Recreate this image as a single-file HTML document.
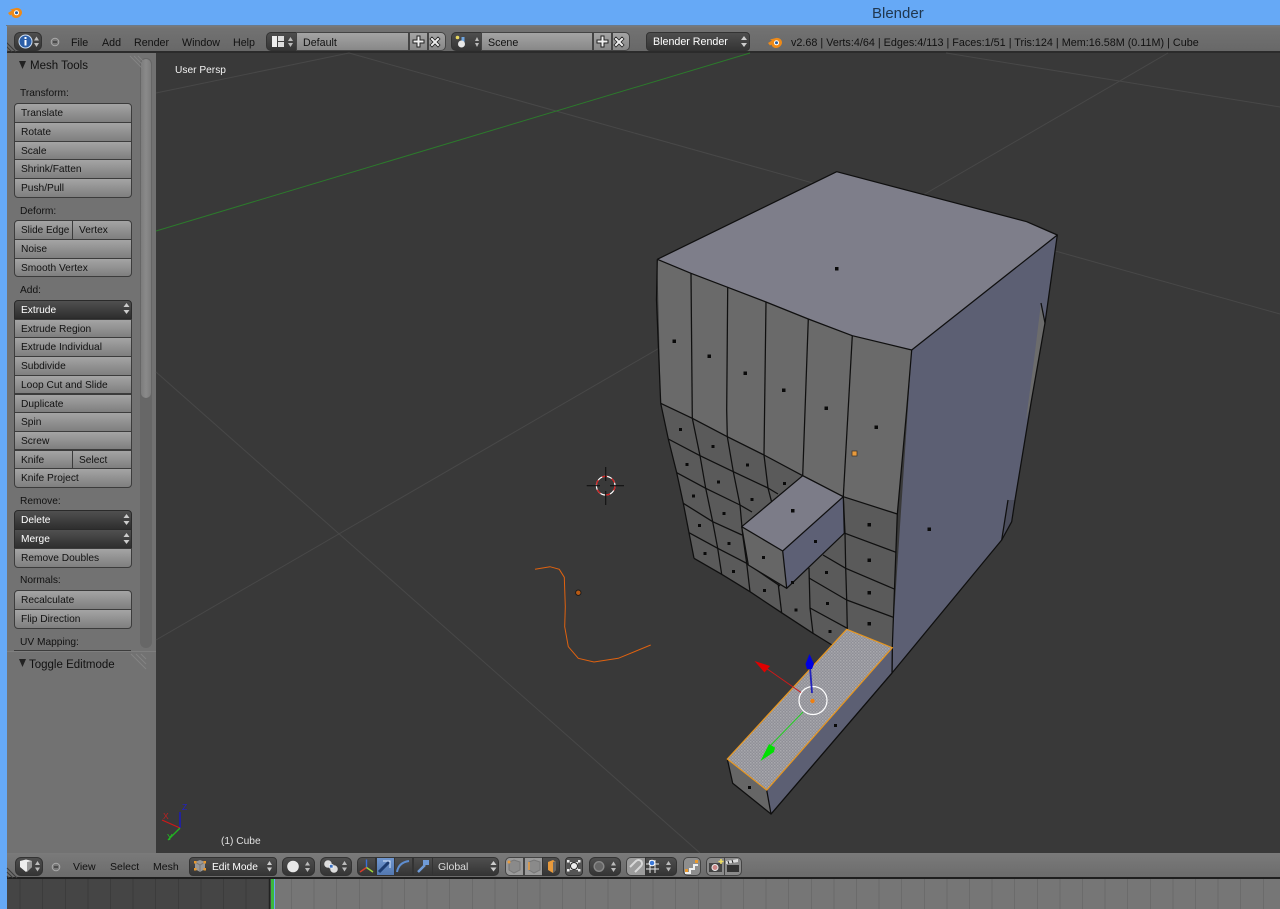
<!DOCTYPE html>
<html><head><meta charset="utf-8"><title>Blender</title>
<style>
html,body{margin:0;padding:0;width:1280px;height:909px;overflow:hidden;background:#66a9f6}
*{box-sizing:border-box}
body{position:relative;font-family:"Liberation Sans",sans-serif;font-size:10.2px;color:#111}
.a{position:absolute}
.t{position:absolute;white-space:nowrap;line-height:14px;height:14px;margin-top:1px}
.b{position:absolute;left:14px;width:118px;height:19.7px;line-height:20px;padding-left:6px;background:linear-gradient(#a4a4a4,#7f7f7f);border:1px solid #3c3c3c;color:#111;white-space:nowrap}
.d{background:linear-gradient(#505050,#2e2e2e);color:#fff;border-color:#2a2a2a}
.tp{border-radius:4px 4px 0 0}.bt{border-radius:0 0 4px 4px}
.w{position:absolute;top:32px;height:19px;border:1px solid #333;background:linear-gradient(#4e4e4e,#353535);border-radius:4px}
.f{position:absolute;height:19px;border:1px solid #444;background:linear-gradient(#a4a4a4,#888)}
.l{position:absolute;left:20px;line-height:14px;color:#111;margin-top:1px}
svg{position:absolute;overflow:visible}
</style></head><body>
<!-- title bar -->
<div class="a" style="left:0;top:0;width:1280px;height:26px;background:#66a9f6"></div>
<svg style="left:7px;top:5px" width="16" height="14" viewBox="0 0 16 14"><path d="M1 8L5 5.5 3 4.5 9 3C12.500 2.500 15 5 15 7.500 15 10.500 12 13 9 13 6.500 13 5 11.500 4.500 9.500L3 10.500Z" fill="#ee8a18"/><circle cx="9.500" cy="7.800" r="2.500" fill="#fff"/><circle cx="9.500" cy="7.800" r="1.500" fill="#2a5f9e"/></svg>
<div class="t" style="left:872px;top:5px;font-size:15px;line-height:16px;height:16px;color:#20374f">Blender</div>

<!-- top header -->
<div class="a" style="left:6px;top:25px;width:1274px;height:28px;background:linear-gradient(#7a7a7a 0,#727272 2px,#686868 100%);border-top:1px solid #6b7a8a;border-bottom:2px solid #2b2b2b"></div>
<svg style="left:6px;top:40px" width="12" height="12"><path d="M0 2L10 12M0 6L6 12M0 10L2 12" stroke="#3b3b3b" stroke-width="1"/></svg>
<div class="w" style="left:14px;width:28px;border-radius:6px"></div>
<svg style="left:18px;top:34px" width="22" height="16"><circle cx="7.500" cy="7.500" r="6.500" fill="#2c5fa8" stroke="#cfe0f5"/><rect x="6.500" y="6" width="2" height="5.500" fill="#fff"/><rect x="6.500" y="3" width="2" height="2" fill="#fff"/><path d="M16 6.500l2.500-4 2.500 4zM16 9l2.500 4 2.500-4z" fill="#bbb"/></svg>
<svg style="left:50px;top:37px" width="10" height="10"><circle cx="5" cy="5" r="3.800" fill="#777" stroke="#aaa"/><path d="M3 5h4" stroke="#222"/></svg>
<div class="t" style="left:71px;top:35px;font-size:10.700px">File</div>
<div class="t" style="left:102px;top:35px;font-size:10.700px">Add</div>
<div class="t" style="left:134px;top:35px;font-size:10.700px">Render</div>
<div class="t" style="left:182px;top:35px;font-size:10.700px">Window</div>
<div class="t" style="left:233px;top:35px;font-size:10.700px">Help</div>

<div class="w" style="left:266px;width:32px;border-radius:5px 0 0 5px"></div>
<svg style="left:272px;top:36px" width="24" height="12"><rect x="0" y="0" width="5" height="11" fill="#eee"/><rect x="6" y="0" width="6" height="5" fill="#ddd"/><rect x="6" y="6" width="6" height="5" fill="#ddd"/><path d="M16 5l2.500-4 2.500 4zM16 7l2.500 4 2.500-4z" fill="#bbb"/></svg>
<div class="f" style="left:296px;top:32px;width:113px;line-height:20px;padding-left:6px;font-size:10.700px">Default</div>
<div class="f" style="left:409px;top:32px;width:19px"></div>
<div class="f" style="left:428px;top:32px;width:18px;border-radius:0 5px 5px 0"></div>
<svg style="left:412px;top:35px" width="32" height="14"><path d="M5 1h3v4h4v3H8v4H5V8H1V5h4z" fill="#f0f0f0" stroke="#222" stroke-width="1"/><path d="M20 2l3 3 3-3 2 2-3 3 3 3-2 2-3-3-3 3-2-2 3-3-3-3z" fill="#eee" stroke="#222" stroke-width=".8"/></svg>

<div class="w" style="left:451px;width:32px;border-radius:5px 0 0 5px"></div>
<svg style="left:455px;top:35px" width="26" height="14"><circle cx="2.500" cy="2.500" r="1.800" fill="#e8d860"/><path d="M8 2v6" stroke="#6fa5e0" stroke-width="3"/><circle cx="6.500" cy="9" r="3.500" fill="#e8e8e8"/><path d="M20 6l2-4 2 4zM20 8l2 4 2-4z" fill="#bbb"/></svg>
<div class="f" style="left:481px;top:32px;width:112px;line-height:20px;padding-left:6px;font-size:10.700px">Scene</div>
<div class="f" style="left:593px;top:32px;width:19px"></div>
<div class="f" style="left:612px;top:32px;width:18px;border-radius:0 5px 5px 0"></div>
<svg style="left:596px;top:35px" width="32" height="14"><path d="M5 1h3v4h4v3H8v4H5V8H1V5h4z" fill="#f0f0f0" stroke="#222" stroke-width="1"/><path d="M20 2l3 3 3-3 2 2-3 3 3 3-2 2-3-3-3 3-2-2 3-3-3-3z" fill="#eee" stroke="#222" stroke-width=".8"/></svg>

<div class="w" style="left:646px;width:104px;color:#fff;line-height:19px;padding-left:6px;font-size:10.700px">Blender Render</div>
<svg style="left:740px;top:35px" width="8" height="13"><path d="M1 5l3-4 3 4zM1 8l3 4 3-4z" fill="#ccc"/></svg>
<svg style="left:767px;top:35px" width="16" height="14" viewBox="0 0 16 14"><path d="M1 8L5 5.500 3 4.500 9 3C12.500 2.500 15 5 15 7.500 15 10.500 12 13 9 13 6.500 13 5 11.500 4.500 9.500L3 10.500Z" fill="#ee8a18"/><circle cx="9.500" cy="7.800" r="2.500" fill="#fff"/><circle cx="9.500" cy="7.800" r="1.500" fill="#2a5f9e"/></svg>
<div class="t" style="left:791px;top:35px;color:#111;font-size:10.800px">v2.68 | Verts:4/64 | Edges:4/113 | Faces:1/51 | Tris:124 | Mem:16.58M (0.11M) | Cube</div>

<!-- left blue edge -->
<div class="a" style="left:0;top:26px;width:7px;height:883px;background:#66a9f6"></div>

<!-- tool panel -->
<div class="a" style="left:7px;top:53px;width:149px;height:800px;background:#727272"></div>
<div class="a" style="left:140px;top:58px;width:12px;height:590px;background:#676767;border-radius:6px"></div>
<div class="a" style="left:140px;top:58px;width:12px;height:341px;background:linear-gradient(90deg,#7c7c7c,#8a8a8a,#7c7c7c);border:1px solid #666;border-radius:6px"></div>
<svg style="left:130px;top:56px" width="14" height="16"><path d="M0 0L13 13M4 0L13 9M8 0L13 5" stroke="#838383"/></svg>
<svg style="left:18px;top:61px" width="9" height="9"><path d="M1 0h7L4.500 8z" fill="#222"/></svg>
<div class="t" style="left:30px;top:58px;font-size:11.500px">Mesh Tools</div>

<div class="l" style="top:86px">Transform:</div>
<div class="b tp" style="top:103px">Translate</div>
<div class="b" style="top:122px">Rotate</div>
<div class="b" style="top:140.700px">Scale</div>
<div class="b" style="top:159.400px">Shrink/Fatten</div>
<div class="b bt" style="top:178px">Push/Pull</div>

<div class="l" style="top:204px">Deform:</div>
<div class="b tp" style="top:220px;width:59px;border-radius:4px 0 0 0;font-size:10px">Slide Edge</div>
<div class="b" style="top:220px;left:72px;width:60px;border-radius:0 4px 0 0">Vertex</div>
<div class="b" style="top:239px">Noise</div>
<div class="b bt" style="top:257.500px">Smooth Vertex</div>

<div class="l" style="top:283px">Add:</div>
<div class="b d tp" style="top:299.500px">Extrude</div>
<svg style="left:123px;top:302px" width="7" height="13"><path d="M.5 5l3-4 3 4zM.5 8l3 4 3-4z" fill="#ccc"/></svg>
<div class="b" style="top:318.500px">Extrude Region</div>
<div class="b" style="top:337px">Extrude Individual</div>
<div class="b" style="top:356px">Subdivide</div>
<div class="b" style="top:374.500px">Loop Cut and Slide</div>
<div class="b" style="top:393.500px">Duplicate</div>
<div class="b" style="top:412px">Spin</div>
<div class="b" style="top:430.500px">Screw</div>
<div class="b" style="top:449.500px;width:59px">Knife</div>
<div class="b" style="top:449.500px;left:72px;width:60px">Select</div>
<div class="b bt" style="top:468px">Knife Project</div>

<div class="l" style="top:494px">Remove:</div>
<div class="b d tp" style="top:510px">Delete</div>
<svg style="left:123px;top:513px" width="7" height="13"><path d="M.5 5l3-4 3 4zM.5 8l3 4 3-4z" fill="#ccc"/></svg>
<div class="b d" style="top:529px">Merge</div>
<svg style="left:123px;top:532px" width="7" height="13"><path d="M.5 5l3-4 3 4zM.5 8l3 4 3-4z" fill="#ccc"/></svg>
<div class="b bt" style="top:548px">Remove Doubles</div>

<div class="l" style="top:573px">Normals:</div>
<div class="b tp" style="top:590px">Recalculate</div>
<div class="b bt" style="top:609px">Flip Direction</div>

<div class="l" style="top:634.500px">UV Mapping:</div>
<div class="a" style="left:14px;top:650px;width:117px;height:1px;background:#3c3c3c"></div>
<div class="a" style="left:7px;top:651px;width:149px;height:1px;background:#7f7f7f"></div>
<svg style="left:131px;top:654px" width="16" height="16"><path d="M0 0L15 15M5 0L15 10M10 0L15 5" stroke="#838383"/></svg>
<svg style="left:18px;top:659px" width="9" height="9"><path d="M1 0h7L4.500 8z" fill="#222"/></svg>
<div class="t" style="left:29px;top:657px;font-size:11.500px">Toggle Editmode</div>

<!-- 3D viewport -->
<svg style="left:156px;top:53px" width="1124" height="800" viewBox="156 53 1124 800">
<defs>
<pattern id="dith" width="3" height="3" patternUnits="userSpaceOnUse"><rect width="3" height="3" fill="#8f8f97"/><rect x="0" y="0" width="1.500" height="1.500" fill="#a9a9ae"/><rect x="1.500" y="1.500" width="1.500" height="1.500" fill="#a0a0a6"/></pattern>
</defs>
<rect x="156" y="53" width="1124" height="800" fill="#393939"/>
<g stroke="#484848" stroke-width="1" fill="none">
<path d="M156 93L349 53"/>
<path d="M349 53L1280 314"/>
<path d="M946 53L1280 107"/>
<path d="M156 640L1168 53"/>
<path d="M156 372L700 853"/>
</g>
<path d="M156 231L750 53" stroke="#2c7a2c" stroke-width="1"/>

<!-- right face -->
<polygon points="911.700,350 1057.300,235 1045,323 1031,403 1015,500 1011.700,521.700 1001.700,540 892,673 771,814 766.700,790 892,647" fill="#5c5f73"/>
<polygon points="1041,303 1045,323 1031,403 1026,420 1034,360" fill="#6c6c6c"/>
<polygon points="1015,500 1011.700,521.700 1001.700,540 1008,500" fill="#4b4d5c"/>
<!-- top face -->
<polygon points="657.300,259.300 836.700,171.700 1026.700,221.700 1057.300,235 911.700,350 852.300,335.700 808.300,319 766,302 727.700,287.300 691,273.300" fill="#7e7e8a"/>
<!-- front upper -->
<polygon points="657.300,259.300 691,273.300 727.700,287.300 766,302 808.300,319 852.300,335.700 911.700,350 897.300,514 843.300,496.700 802.700,475.700 764,455 727.300,436.700 692.300,418.300 660.700,403.300" fill="#6a6a6a"/>
<!-- front lower -->
<polygon points="660.700,403.300 692.300,418.300 727.300,436.700 764,455 802.700,475.700 843.300,496.700 897.300,514 892.300,647 846.700,629.300 832,645 813,633.300 780,611.700 750,591.700 721.700,574.300 694,558.300 689,532.700 683.300,503.300 676.700,472.700 668.300,439" fill="#5a5a5a"/>

<g fill="none" stroke="#0f0f0f" stroke-width="1.250" stroke-linejoin="round">
<!-- top face outline -->
<path d="M657.300,259.300 836.700,171.700 1026.700,221.700 1057.300,235 911.700,350 852.300,335.700 808.300,319 766,302 727.700,287.300 691,273.300 657.300,259.300"/>
<!-- upper columns -->
<path d="M657.300,259.300 656.500,300 660.700,403.300"/>
<path d="M691,273.300 692.300,418.300"/>
<path d="M727.700,287.300 726.700,410 727.300,436.700"/>
<path d="M766,302 764,455"/>
<path d="M808.300,319 802.700,475.700"/>
<path d="M852.300,335.700 843.300,496.700"/>
<path d="M911.700,350 906.700,410 897.300,514 892.300,647 892,673"/>
<!-- silhouette right -->
<path d="M1057.300,235 1045,323 1031,403 1015,500 1011.700,521.700 1001.700,540 892,673 771,814"/>
<path d="M1041,303 1045,323"/>
<path d="M1008,500 1001.700,540"/>
<!-- grid rows -->
<path d="M660.700,403.300 692.300,418.300 727.300,436.700 764,455 802.700,475.700 843.300,496.700 897.300,514"/>
<path d="M668.300,439 700,455.700 733.300,471.700 768,488 778,494"/>
<path d="M676.700,472.700 705.700,488.300 740,505 752,512"/>
<path d="M683.300,503.300 712.700,521.700 742,535"/>
<path d="M689,532.700 717.700,548.300 746.700,563.300 780,586"/>
<path d="M694,558.300 721.700,574.300 750,591.700 780,611.700 813,633.300 832,645"/>
<path d="M845,533.300 896,552.300"/>
<path d="M823,555 845.700,568.300 895,589.300"/>
<path d="M809,578 846.700,600 893.300,617.300"/>
<path d="M810,608 847.300,628.300"/>
<!-- grid cols -->
<path d="M660.700,403.300 668.300,439 676.700,472.700 683.300,503.300 689,532.700 694,558.300"/>
<path d="M692.300,418.300 700,455.700 705.700,488.300 712.700,521.700 717.700,548.300 721.700,574.300"/>
<path d="M727.300,436.700 733.300,471.700 740,505 742.700,535 746.700,563.300 750,591.700"/>
<path d="M764,455 768,488 775,515"/>
<path d="M778.300,585 781.700,613.300"/>
<path d="M809,568 810,608 813,633.300"/>
<path d="M843.300,496.700 845,533.300 845.700,568.300 846.700,600 847.300,629"/>
</g>

<!-- extruded box -->
<polygon points="741.700,526.700 782.700,551 786.700,588.300 748.300,565" fill="#666"/>
<polygon points="843.300,496.700 844.300,533.300 786.700,588.300 782.700,551" fill="#5d6075"/>
<polygon points="802.700,475.700 843.300,496.700 782.700,551 741.700,526.700" fill="#7c7c88"/>
<path d="M802.700,475.700 843.300,496.700 844.300,533.300 786.700,588.300 748.300,565 741.700,526.700 802.700,475.700M741.700,526.700 782.700,551 843.300,496.700M782.700,551 786.700,588.300" fill="none" stroke="#0f0f0f" stroke-width="1.250"/>

<!-- long selected box -->
<polygon points="727.300,759 766.700,790 771,814 732.700,783.300" fill="#666"/>
<polygon points="892.300,647.700 892.300,671.700 771,814 766.700,790" fill="#5c5f73"/>
<path d="M727.300,759 732.700,783.300 771,814 892,673 892.300,647.700" fill="none" stroke="#0f0f0f" stroke-width="1.250"/>
<path d="M766.700,790 771,814" stroke="#0f0f0f" stroke-width="1.250"/>
<polygon points="846.700,629.300 892.300,647.700 766.700,790 727.300,759" fill="url(#dith)" stroke="#e8971f" stroke-width="1.200"/>

<!-- face dots -->
<g fill="#0a0a0a">
<rect x="835" y="267" width="3.500" height="3.500"/><rect x="672.500" y="339.500" width="3.500" height="3.500"/><rect x="707.500" y="354.500" width="3.500" height="3.500"/><rect x="743.500" y="371.500" width="3.500" height="3.500"/><rect x="782" y="388.500" width="3.500" height="3.500"/><rect x="824.500" y="406.500" width="3.500" height="3.500"/><rect x="874.500" y="425.500" width="3.500" height="3.500"/><rect x="927.500" y="527.500" width="3.500" height="3.500"/>
<rect x="791" y="509" width="3.500" height="3.500"/><rect x="814" y="540" width="3" height="3"/><rect x="762" y="556" width="3" height="3"/>
<rect x="867.500" y="523" width="3.500" height="3.500"/><rect x="867.500" y="558.500" width="3.500" height="3.500"/><rect x="867.500" y="591" width="3.500" height="3.500"/><rect x="867.500" y="622" width="3.500" height="3.500"/>
<rect x="679" y="428" width="3" height="3"/><rect x="711.500" y="445" width="3" height="3"/><rect x="746" y="463.500" width="3" height="3"/><rect x="783" y="482" width="3" height="3"/>
<rect x="685.500" y="463" width="3" height="3"/><rect x="717" y="480.500" width="3" height="3"/><rect x="750.500" y="498" width="3" height="3"/>
<rect x="692" y="494.500" width="3" height="3"/><rect x="722.500" y="512" width="3" height="3"/>
<rect x="698" y="524" width="3" height="3"/><rect x="727.500" y="542" width="3" height="3"/>
<rect x="703.500" y="552" width="3" height="3"/><rect x="732" y="570" width="3" height="3"/><rect x="763" y="589" width="3" height="3"/><rect x="794.500" y="608.500" width="3" height="3"/><rect x="828.500" y="630" width="3" height="3"/>
<rect x="825" y="571" width="3" height="3"/><rect x="826" y="602" width="3" height="3"/><rect x="791" y="581" width="3" height="3"/>
<rect x="834" y="724" width="3" height="3"/><rect x="748" y="786" width="3" height="3"/>
</g>
<rect x="852" y="451" width="5" height="5" fill="#e89a3c" stroke="#3a3026" stroke-width=".7"/>

<!-- manipulator -->
<circle cx="813" cy="700.500" r="14" fill="none" stroke="#fff" stroke-width="1.200"/>
<circle cx="812.500" cy="701" r="2.200" fill="#f08010"/>
<path d="M801,692.500 763,666" stroke="#d01818" stroke-width="1"/>
<polygon points="754.500,661 770,666 764.500,672.500" fill="#e00000"/>
<path d="M812,693 810,667" stroke="#2222bb" stroke-width="1.800"/>
<polygon points="809.500,654 814,664 812,669 807,669 805.500,664" fill="#0000e0"/>
<path d="M803,712 771,745" stroke="#22cc22" stroke-width="1"/>
<polygon points="760.500,761 769,744 775,747.500 774,752" fill="#00e000"/>

<!-- curve and cursor -->
<path d="M535,569.300 550,566.700 559.300,569.300 564.300,577.300 565.300,606.700 564.700,626.700 568.300,646.700 578.300,658.300 594,662 618.300,658.300 650.700,645" fill="none" stroke="#e0620f" stroke-width="1"/>
<circle cx="578.300" cy="592.700" r="2.700" fill="#b85a14" stroke="#1a1a1a" stroke-width=".9"/>
<circle cx="605.700" cy="485.700" r="9.300" fill="none" stroke="#fff" stroke-width="1.200"/>
<circle cx="605.700" cy="485.700" r="9.300" fill="none" stroke="#d81818" stroke-width="1.200" stroke-dasharray="5 5"/>
<path d="M586.700,485.700H600M610,485.700H624M605.700,467V481M605.700,491V505" stroke="#111" stroke-width="1.100"/>

<!-- axis widget -->
<path d="M180,828V812" stroke="#1818c8" stroke-width="1.400"/>
<path d="M180,828L162,820" stroke="#d01818" stroke-width="1.200"/>
<path d="M180,828L168,840" stroke="#22b022" stroke-width="1.400"/>
<text x="163" y="819" font-family="Liberation Sans,sans-serif" font-size="8.500" fill="#c02020">X</text>
<text x="182" y="810" font-family="Liberation Sans,sans-serif" font-size="8.500" fill="#2020c8">Z</text>
<text x="167" y="840" font-family="Liberation Sans,sans-serif" font-size="8.500" fill="#22c022">Y</text>
<text x="175" y="73" font-family="Liberation Sans,sans-serif" font-size="10.200" fill="#f2f2f2">User Persp</text>
<text x="221" y="844" font-family="Liberation Sans,sans-serif" font-size="10.200" fill="#e0e0e0">(1) Cube</text>
</svg>

<!-- bottom header -->
<div class="a" style="left:7px;top:853px;width:1273px;height:26px;background:linear-gradient(#7a7a7a,#6c6c6c);border-bottom:2px solid #1f1f1f"></div>
<svg style="left:7px;top:866px" width="12" height="12"><path d="M0 2L10 12M0 6L6 12M0 10L2 12" stroke="#3b3b3b"/></svg>
<div class="w" style="left:15px;top:857px;width:28px;border-radius:6px"></div>
<svg style="left:19px;top:859px" width="22" height="15"><path d="M1 2L7 .5 13 2V8L7 13 1 8Z" fill="#eee"/><path d="M8 3L13 2V8L8 13Z" fill="#999"/><path d="M16 6l2.500-4 2.500 4zM16 8.500l2.500 4 2.500-4z" fill="#bbb"/></svg>
<svg style="left:51px;top:862px" width="10" height="10"><circle cx="5" cy="5" r="3.800" fill="#777" stroke="#aaa"/><path d="M3 5h4" stroke="#222"/></svg>
<div class="t" style="left:73px;top:859px;font-size:10.500px">View</div>
<div class="t" style="left:110px;top:859px;font-size:10.500px">Select</div>
<div class="t" style="left:153px;top:859px;font-size:10.500px">Mesh</div>

<div class="w" style="left:189px;top:857px;width:88px;color:#fff;line-height:19px;padding-left:22px">Edit Mode</div>
<svg style="left:194px;top:859px" width="80" height="15"><path d="M1 3L6 1 11 3V10L6 13 1 10Z" fill="#999"/><path d="M6 6V13M1 3L6 6 11 3" stroke="#777" fill="none"/><g fill="#e8982c"><rect x="0" y="2" width="2.500" height="2.500"/><rect x="9.500" y="2" width="2.500" height="2.500"/><rect x="0" y="9" width="2.500" height="2.500"/><rect x="9.500" y="9" width="2.500" height="2.500"/></g><path d="M73 6l2.500-4 2.500 4zM73 8.500l2.500 4 2.500-4z" fill="#ccc"/></svg>

<div class="w" style="left:282px;top:857px;width:33px;border-radius:6px"></div>
<svg style="left:287px;top:860px" width="26" height="14"><circle cx="6" cy="6.500" r="5.800" fill="#e8e8e8"/><path d="M18 5.500l2.500-4 2.500 4zM18 8l2.500 4 2.500-4z" fill="#bbb"/></svg>
<div class="w" style="left:320px;top:857px;width:32px;border-radius:6px"></div>
<svg style="left:323px;top:859px" width="27" height="14"><circle cx="5" cy="5" r="3.800" fill="#ddd"/><circle cx="11" cy="10" r="3.800" fill="#ddd"/><rect x="6.500" y="5.500" width="3.500" height="3.500" fill="#3a6fc0" stroke="#fff" stroke-width=".6"/><path d="M19 6l2.500-4 2.500 4zM19 8.500l2.500 4 2.500-4z" fill="#bbb"/></svg>

<!-- manipulator group -->
<div class="w" style="left:357px;top:857px;width:19px;border-radius:5px 0 0 5px"></div>
<div class="w" style="left:375.500px;top:857px;width:19px;border-radius:0;background:linear-gradient(#6f96cf,#5378b0)"></div>
<div class="w" style="left:394px;top:857px;width:19px;border-radius:0"></div>
<div class="w" style="left:412.500px;top:857px;width:20px;border-radius:0"></div>
<svg style="left:358px;top:858px" width="74" height="17"><path d="M8.500 9.500V1.500" stroke="#3a70d8" stroke-width="1.400"/><path d="M8.500 9.500L2 14" stroke="#d83a2a" stroke-width="1.400"/><path d="M8.500 9.500L15 14" stroke="#9fd83a" stroke-width="1.400"/><path d="M21 14L31 4" stroke="#1d3c70" stroke-width="3"/><path d="M25 3h7v7" stroke="#d8e6fb" fill="none"/><path d="M39 14C40 8 44 4 51 3" stroke="#5f8ed0" fill="none" stroke-width="2"/><path d="M60 14L67 7" stroke="#6f9bd8" stroke-width="2.500"/><rect x="65" y="2" width="6" height="5" fill="#6f9bd8"/></svg>
<div class="w" style="left:432px;top:857px;width:67px;border-radius:0 5px 5px 0;color:#ddd;line-height:19px;padding-left:5px;font-size:10.500px">Global</div>
<svg style="left:490px;top:859px" width="7" height="14"><path d="M.5 6l3-4 3 4zM.5 8.500l3 4 3-4z" fill="#ccc"/></svg>

<!-- select mode -->
<div class="f" style="left:505px;top:857px;width:19px;border-radius:5px 0 0 5px;background:#9a9a9a"></div>
<div class="f" style="left:523.500px;top:857px;width:19px;background:#9a9a9a"></div>
<div class="w" style="left:542px;top:857px;width:18px;border-radius:0 5px 5px 0"></div>
<svg style="left:506px;top:858px" width="54" height="16"><path d="M3 4L8 2 14 4V12L8 15 3 12Z" fill="#8a8a8a" stroke="#777"/><circle cx="3" cy="4" r="1.500" fill="#e89a3c"/><path d="M23 4L28 2 34 4V12L28 15 23 12Z" fill="#8a8a8a" stroke="#777"/><path d="M23 4V12" stroke="#e89a3c" stroke-width="1.500"/><path d="M42 4L47 2 50 4V12L47 15 42 12Z" fill="#e89a3c"/><path d="M47 4L50 3V12L47 15Z" fill="#666"/></svg>
<div class="w" style="left:565px;top:857px;width:18px;background:#555"></div>
<svg style="left:567px;top:859px" width="14" height="14"><rect x="3" y="3" width="8" height="8" fill="#ddd"/><g fill="#eee"><rect x="0" y="1" width="2.500" height="2.500"/><rect x="11" y="1" width="2.500" height="2.500"/><rect x="0" y="10" width="2.500" height="2.500"/><rect x="11" y="10" width="2.500" height="2.500"/></g><circle cx="7" cy="7" r="4" fill="#222"/><circle cx="7" cy="7" r="3" fill="#eee"/></svg>
<div class="w" style="left:589px;top:857px;width:32px;border-radius:6px"></div>
<svg style="left:592px;top:860px" width="27" height="14"><circle cx="7" cy="6.500" r="4.800" fill="#666" stroke="#888" stroke-width="1.400"/><path d="M19 5.500l2.500-4 2.500 4zM19 8l2.500 4 2.500-4z" fill="#bbb"/></svg>

<!-- snap -->
<div class="f" style="left:626px;top:857px;width:20px;border-radius:5px 0 0 5px;background:#9c9c9c"></div>
<div class="w" style="left:645px;top:857px;width:32px;border-radius:0 5px 5px 0"></div>
<svg style="left:628px;top:859px" width="48" height="15"><path d="M2 8L8 2 a3.500 3.500 0 0 1 5 5L7 13" stroke="#d8d8d8" stroke-width="2" fill="none"/><path d="M18 5h13M18 10h13M22 1v13M27 1v13" stroke="#e8e8e8"/><circle cx="24" cy="4" r="2.800" fill="#3a78d8" stroke="#fff"/><path d="M38 6l2.500-4 2.500 4zM38 8.500l2.500 4 2.500-4z" fill="#bbb"/></svg>

<div class="f" style="left:683px;top:857px;width:18px;border-radius:5px;background:#8e8e8e"></div>
<svg style="left:684px;top:859px" width="16" height="15"><path d="M1 14L6 14V10H10V6H14" fill="none" stroke="#eee" stroke-width="2"/><rect x="1" y="10" width="3" height="3" fill="#e8982c"/><rect x="11" y="1" width="3" height="3" fill="#e8982c"/></svg>

<div class="f" style="left:706px;top:857px;width:19px;border-radius:5px 0 0 5px;background:#8a8a8a"></div>
<div class="f" style="left:724px;top:857px;width:18px;border-radius:0 5px 5px 0;background:#8a8a8a"></div>
<svg style="left:708px;top:858px" width="32" height="16"><rect x="1" y="5" width="13" height="9" fill="#444"/><circle cx="7" cy="9.500" r="3" fill="#c88" stroke="#eee"/><path d="M13 1v5M10.500 3.500h5" stroke="#f0e060" stroke-width="1.500"/><rect x="19" y="7" width="12" height="7" fill="#333"/><path d="M18 3l12-2v3L18 6z" fill="#ddd"/><path d="M20 3l1 3M24 2l1 3" stroke="#222"/></svg>

<!-- timeline -->
<div class="a" style="left:7px;top:879px;width:265px;height:30px;background-color:#454545;background-image:repeating-linear-gradient(90deg,transparent 0,transparent 12.600px,#3c3c3c 12.600px,#3c3c3c 13.600px,transparent 13.600px,transparent 22.600px)"></div>
<div class="a" style="left:275px;top:879px;width:1005px;height:30px;background-color:#767676;background-image:repeating-linear-gradient(90deg,transparent 0,transparent 16px,#6b6b6b 16px,#6b6b6b 17px,transparent 17px,transparent 22.600px)"></div>
<div class="a" style="left:269px;top:879px;width:1px;height:30px;background:#222"></div>
<div class="a" style="left:271px;top:879px;width:3px;height:30px;background:#3cb83c"></div>
</body></html>
